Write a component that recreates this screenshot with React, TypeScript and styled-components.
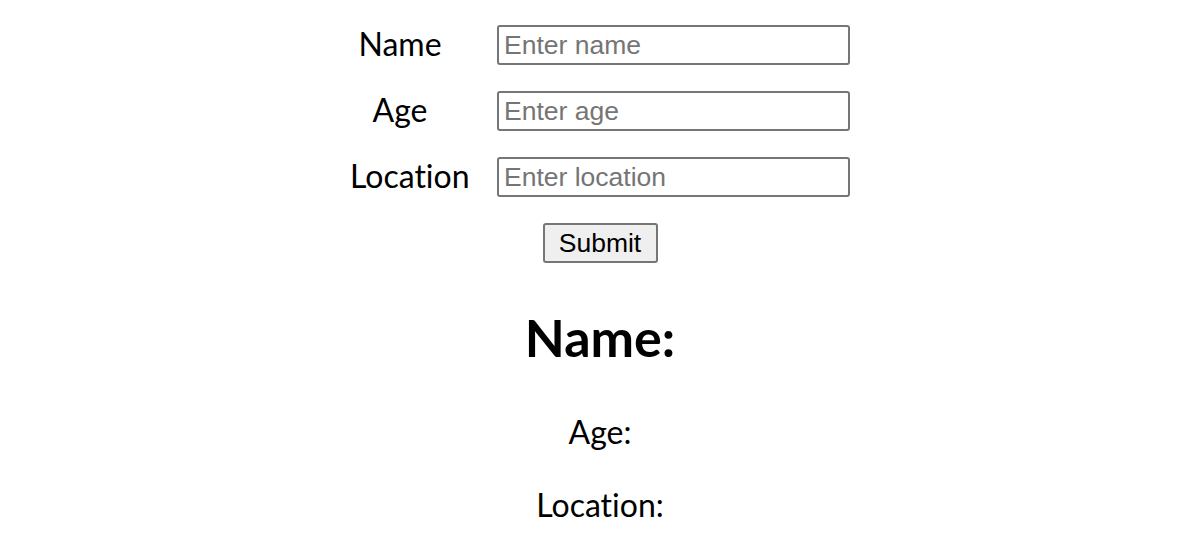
import styled, { createGlobalStyle } from "styled-components";

const GlobalStyle = createGlobalStyle`
  body {
    margin: 0;
    background: #ffffff;
    font-family: "Lato", "Noto Sans", sans-serif;
    font-variant-ligatures: none;
    color: #000000;
  }
`;

const fields = [
  { label: "Name", placeholder: "Enter name" },
  { label: "Age", placeholder: "Enter age" },
  { label: "Location", placeholder: "Enter location" },
];

const App = () => {
  return (
    <>
      <GlobalStyle />
      <PageWrapper>
        <Form onSubmit={(e) => e.preventDefault()}>
          {fields.map((field) => (
            <FieldRow key={field.label}>
              <Label>{field.label}</Label>
              <Input placeholder={field.placeholder} />
            </FieldRow>
          ))}
          <SubmitButton type="submit">Submit</SubmitButton>
        </Form>
        <Result>
          <Title>Name:</Title>
          <Info>Age:</Info>
          <Info>Location:</Info>
        </Result>
      </PageWrapper>
    </>
  );
};

export default App;

const PageWrapper = styled.div`
  display: flex;
  flex-direction: column;
  align-items: center;
  padding-top: 25px;
`;

const Form = styled.form`
  display: flex;
  flex-direction: column;
  align-items: center;
  gap: 26px;
`;

const FieldRow = styled.div`
  display: flex;
  align-items: center;
  gap: 47px;
`;

const Label = styled.label`
  width: 100px;
  font-size: 32px;
  text-align: center;
  white-space: nowrap;
  line-height: 36px;
  margin-bottom: 3px;
`;

const Input = styled.input`
  box-sizing: border-box;
  width: 353px;
  height: 40px;
  padding: 0 5px;
  border: 2px solid #767676;
  border-radius: 3px;
  font-family: "Liberation Sans", Arial, sans-serif;
  font-size: 26.5px;
  color: #000000;

  &::placeholder {
    color: #757575;
  }
`;

const SubmitButton = styled.button`
  box-sizing: border-box;
  width: 115px;
  height: 40px;
  padding: 0;
  border: 2px solid #767676;
  border-radius: 3px;
  background: #efefef;
  font-family: "Liberation Sans", Arial, sans-serif;
  font-size: 26.5px;
  color: #000000;
`;

const Result = styled.div`
  display: flex;
  flex-direction: column;
  align-items: center;
  margin-top: 39px;
`;

const Title = styled.h1`
  margin: 0 0 40px;
  font-size: 52px;
  font-weight: 700;
  line-height: 70px;
`;

const Info = styled.p`
  margin: 0 0 33px;
  font-size: 32px;
  line-height: 40px;
`;
